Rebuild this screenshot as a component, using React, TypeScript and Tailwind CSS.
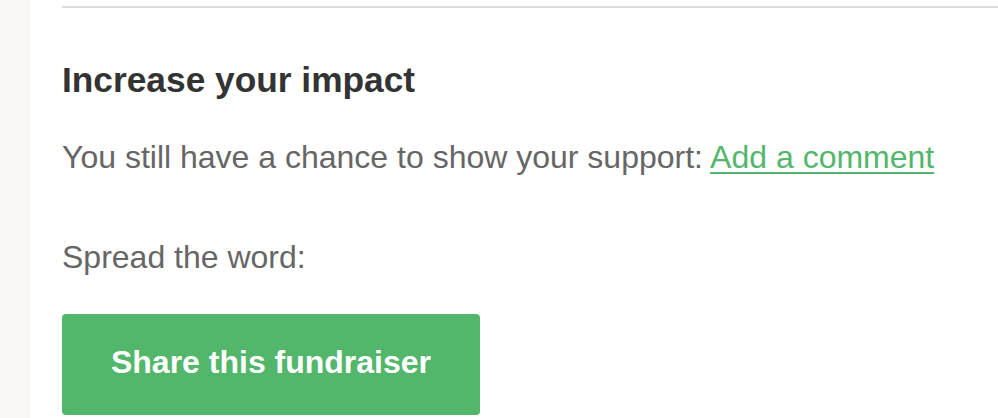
import React from "react";

export default function App() {
  return (
    <div
      className="flex w-[998px] h-[418px] overflow-hidden bg-white"
      style={{ fontFamily: '"Liberation Sans", Arial, sans-serif' }}
    >
      <div className="w-[30px] shrink-0 bg-[#fbf7f4]" />
      <div className="flex-1 pl-[32px] pt-[6px]">
        <div className="h-[2px] bg-[#dcdcdc]" />
        <h2 className="mt-[52px] text-[35.3px] leading-[40px] font-bold text-[#333333]">
          Increase your impact
        </h2>
        <p className="mt-[38px] text-[32px] leading-[38px] text-[#666666] whitespace-nowrap">
          You still have a chance to show your support:{" "}
          <a href="#" className="text-[#52b66b] underline underline-offset-[4px] decoration-[2px]">
            Add a comment
          </a>
        </p>
        <p className="mt-[62px] text-[32px] leading-[38px] text-[#666666]">Spread the word:</p>
        <button className="mt-[38px] w-[418px] h-[101px] pb-[6px] rounded-[4px] bg-[#52b66b] text-white text-[32px] font-bold flex items-center justify-center">
          Share this fundraiser
        </button>
      </div>
    </div>
  );
}
